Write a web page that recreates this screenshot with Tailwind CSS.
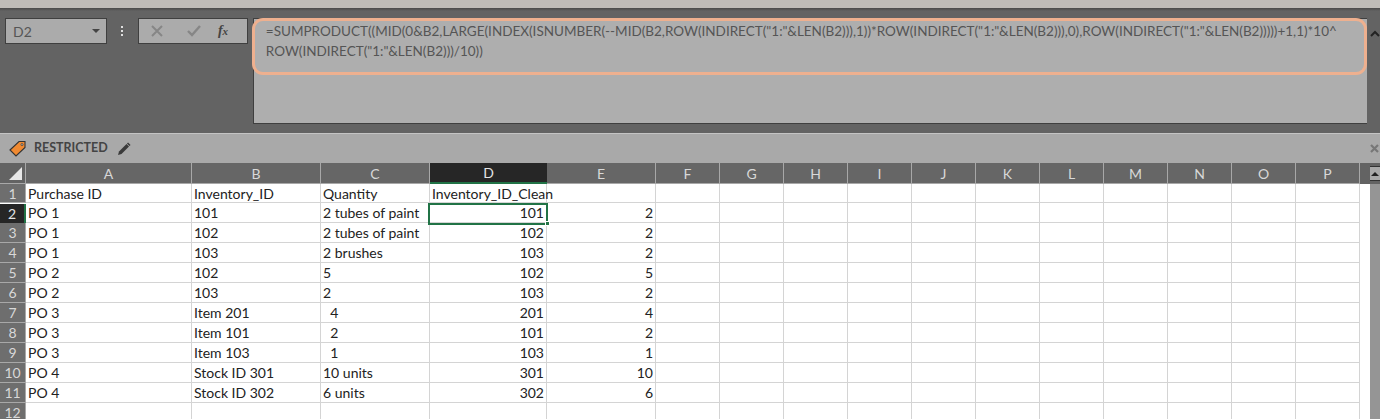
<!DOCTYPE html>
<html lang="en">
  <head>
    <meta charset="UTF-8" />
    <title>Inventory sheet</title>
    <script src="https://cdn.jsdelivr.net/npm/@tailwindcss/browser@4"></script>
  </head>
  <body class="w-[1380px] h-[419px] overflow-hidden bg-[#636363] font-['Lato','Liberation_Sans',sans-serif]">
    <!-- ribbon bottom edge -->
    <div class="h-[8px] bg-[#bfbcb8]"></div>
    <div class="h-[3px] bg-gradient-to-b from-[#4a4a4a] to-[#636363]"></div>

    <!-- formula bar -->
    <div class="flex h-[123px] pt-[7px] border-b border-[#c4c4c4]">
      <div class="ml-[5px] w-[102px] h-[26px] flex items-center justify-between pl-[7px] pr-[6px] bg-[#ababab] border border-[#3f3f3f] text-[14px] text-[#555]">
        <span>D2</span>
        <span class="w-0 h-0 border-x-[4px] border-x-transparent border-t-[4px] border-t-[#444]"></span>
      </div>
      <div class="ml-[14px] w-[3px] h-[26px] flex flex-col items-center justify-center gap-[2px]">
        <span class="w-[2px] h-[2px] bg-[#e0e0e0]"></span>
        <span class="w-[2px] h-[2px] bg-[#e0e0e0]"></span>
        <span class="w-[2px] h-[2px] bg-[#e0e0e0]"></span>
      </div>
      <div class="ml-[14px] w-[110px] h-[26px] flex items-center bg-[#ababab] border border-[#3f3f3f]">
        <svg class="ml-[12px]" width="12" height="12" viewBox="0 0 12 12"><path d="M1 1 L11 11 M11 1 L1 11" stroke="#868686" stroke-width="2" fill="none" /></svg>
        <svg class="ml-[24px]" width="14" height="12" viewBox="0 0 14 12"><path d="M1 6 L5 10 L13 1" stroke="#868686" stroke-width="2.4" fill="none" /></svg>
        <span class="ml-[17px] font-['Liberation_Serif',serif] italic font-bold text-[14px] leading-none text-[#444]">f<span class="text-[11px]">x</span></span>
      </div>
      <div class="relative ml-[5px] w-[1115px] h-[106px] bg-[#aeaeae] border-l border-t border-b border-[#3f3f3f]">
        <p class="pl-[12px] pt-[2px] w-[1090px] text-[13.5px] leading-[20px] text-[#555] break-words">=SUMPRODUCT((MID(0&amp;B2,LARGE(INDEX(ISNUMBER(--MID(B2,ROW(INDIRECT("1:"&amp;LEN(B2))),1))*ROW(INDIRECT("1:"&amp;LEN(B2))),0),ROW(INDIRECT("1:"&amp;LEN(B2)))))+1,1)*10^ ROW(INDIRECT("1:"&amp;LEN(B2)))/10))</p>
        <div class="absolute left-[-2px] top-[-1px] w-[1115px] h-[57px] border-[3px] border-[#eeb08f] rounded-[11px]"></div>
      </div>
      <svg class="ml-[3px] mt-[12px]" width="10" height="7" viewBox="0 0 10 7"><path d="M1 6 L5 2 L9 6" stroke="#222" stroke-width="2" fill="none" /></svg>
    </div>

    <!-- sensitivity label -->
    <div class="flex items-center h-[29px] bg-[#a9a9a9] text-[#444]">
      <svg class="ml-[9px]" width="17" height="17" viewBox="0 0 17 17"><path d="M1 10 L10 1.5 L16 1.5 L16 7.5 L7 16 Z" fill="#f08a32" stroke="#333" stroke-width="1.1" /><circle cx="13" cy="4.6" r="1.1" fill="#a9a9a9" stroke="#333" stroke-width="0.6" /></svg>
      <span class="ml-[8px] text-[12.5px] font-bold">RESTRICTED</span>
      <svg class="ml-[9px]" width="14" height="14" viewBox="0 0 14 14"><path d="M1 13 L2 9.5 L9.5 2 L12 4.5 L4.5 12 Z" fill="#3a3a3a" /><path d="M10.5 1 L13 3.5" stroke="#3a3a3a" stroke-width="1.6" /></svg>
      <svg class="ml-auto mr-[1px]" width="9" height="9" viewBox="0 0 9 9"><path d="M1 1 L8 8 M8 1 L1 8" stroke="#777" stroke-width="2.2" /></svg>
    </div>

    <!-- sheet -->
    <div class="flex h-[256px]">
      <div class="relative w-[1369px] bg-white">
        <div id="sheet" class="grid grid-cols-[26px_166px_129px_109px_117px_109px_repeat(11,64px)_10px] auto-rows-[20px] text-[14px] text-[#222] whitespace-pre"></div>
        <!-- active cell -->
        <div class="absolute left-[428px] top-[40px] w-[120px] h-[22px] border-2 border-[#217346]"></div>
        <div class="absolute left-[545px] top-[58px] w-[5px] h-[5px] bg-[#217346] border border-white"></div>
      </div>
      <!-- scrollbar -->
      <div class="w-[11px] bg-[#959595]">
        <div class="h-[21px] pt-[3px] bg-[#636363]">
          <div class="h-[15px] flex items-center justify-center bg-[#a9a9a9] border-l border-y border-[#333]">
            <span class="w-0 h-0 border-x-[4px] border-x-transparent border-b-[4px] border-b-[#222]"></span>
          </div>
        </div>
      </div>
    </div>

    <script>
      let cols = ["A", "B", "C", "D", "E", "F", "G", "H", "I", "J", "K", "L", "M", "N", "O", "P"];
      let rows = [
        ["Purchase ID", "Inventory_ID", "Quantity", "Inventory_ID_Clean", ""],
        ["PO 1", "101", "2 tubes of paint", "101", "2"],
        ["PO 1", "102", "2 tubes of paint", "102", "2"],
        ["PO 1", "103", "2 brushes", "103", "2"],
        ["PO 2", "102", "5", "102", "5"],
        ["PO 2", "103", "2", "103", "2"],
        ["PO 3", "Item 201", "  4", "201", "4"],
        ["PO 3", "Item 101", "  2", "101", "2"],
        ["PO 3", "Item 103", "  1", "103", "1"],
        ["PO 4", "Stock ID 301", "10 units", "301", "10"],
        ["PO 4", "Stock ID 302", "6 units", "302", "6"],
        ["", "", "", "", ""],
      ];
      let sheet = document.getElementById("sheet");
      let html = "";

      // header row
      html += `<div class="h-[21px] flex items-end justify-end bg-[#636363] border-r border-b border-[#a8a8a8]"><span class="mb-[3px] mr-[3px] w-0 h-0 border-l-[13px] border-l-transparent border-b-[13px] border-b-[#e8e8e8]"></span></div>`;
      cols.forEach((c) => {
        if (c === "D") {
          html += `<div class="h-[21px] flex items-center justify-center bg-[#262626] border-b-2 border-[#217346] text-[#e4e4e4]">${c}</div>`;
        } else {
          html += `<div class="h-[21px] flex items-center justify-center bg-[#666] border-r border-b border-[#a8a8a8] text-[#d8d8d8]">${c}</div>`;
        }
      });
      html += `<div class="h-[21px] bg-[#636363]"></div>`;

      rows.forEach((r, i) => {
        let top = i === 0 ? "mt-[1px]" : "";
        if (i === 1) {
          html += `<div class="mt-[1px] flex items-center justify-center bg-[#262626] border-r-2 border-[#217346] text-[#e4e4e4]">${i + 1}</div>`;
        } else {
          html += `<div class="${top} flex items-center justify-center bg-[#6e6e6e] border-r border-b border-[#a8a8a8] text-[#d8d8d8]">${i + 1}</div>`;
        }
        for (let c = 0; c < 16; c++) {
          let v = r[c] || "";
          let align = c === 3 || c === 4 ? (i === 0 ? "" : "justify-end pr-[2px]") : "";
          html += `<div class="${top} flex items-center pl-[2px] overflow-visible ${align} border-r border-b border-[#d4d4d4]">${v}</div>`;
        }
        html += `<div class="${top} border-b-0 bg-white"></div>`;
      });
      sheet.innerHTML = html;
    </script>
  </body>
</html>
